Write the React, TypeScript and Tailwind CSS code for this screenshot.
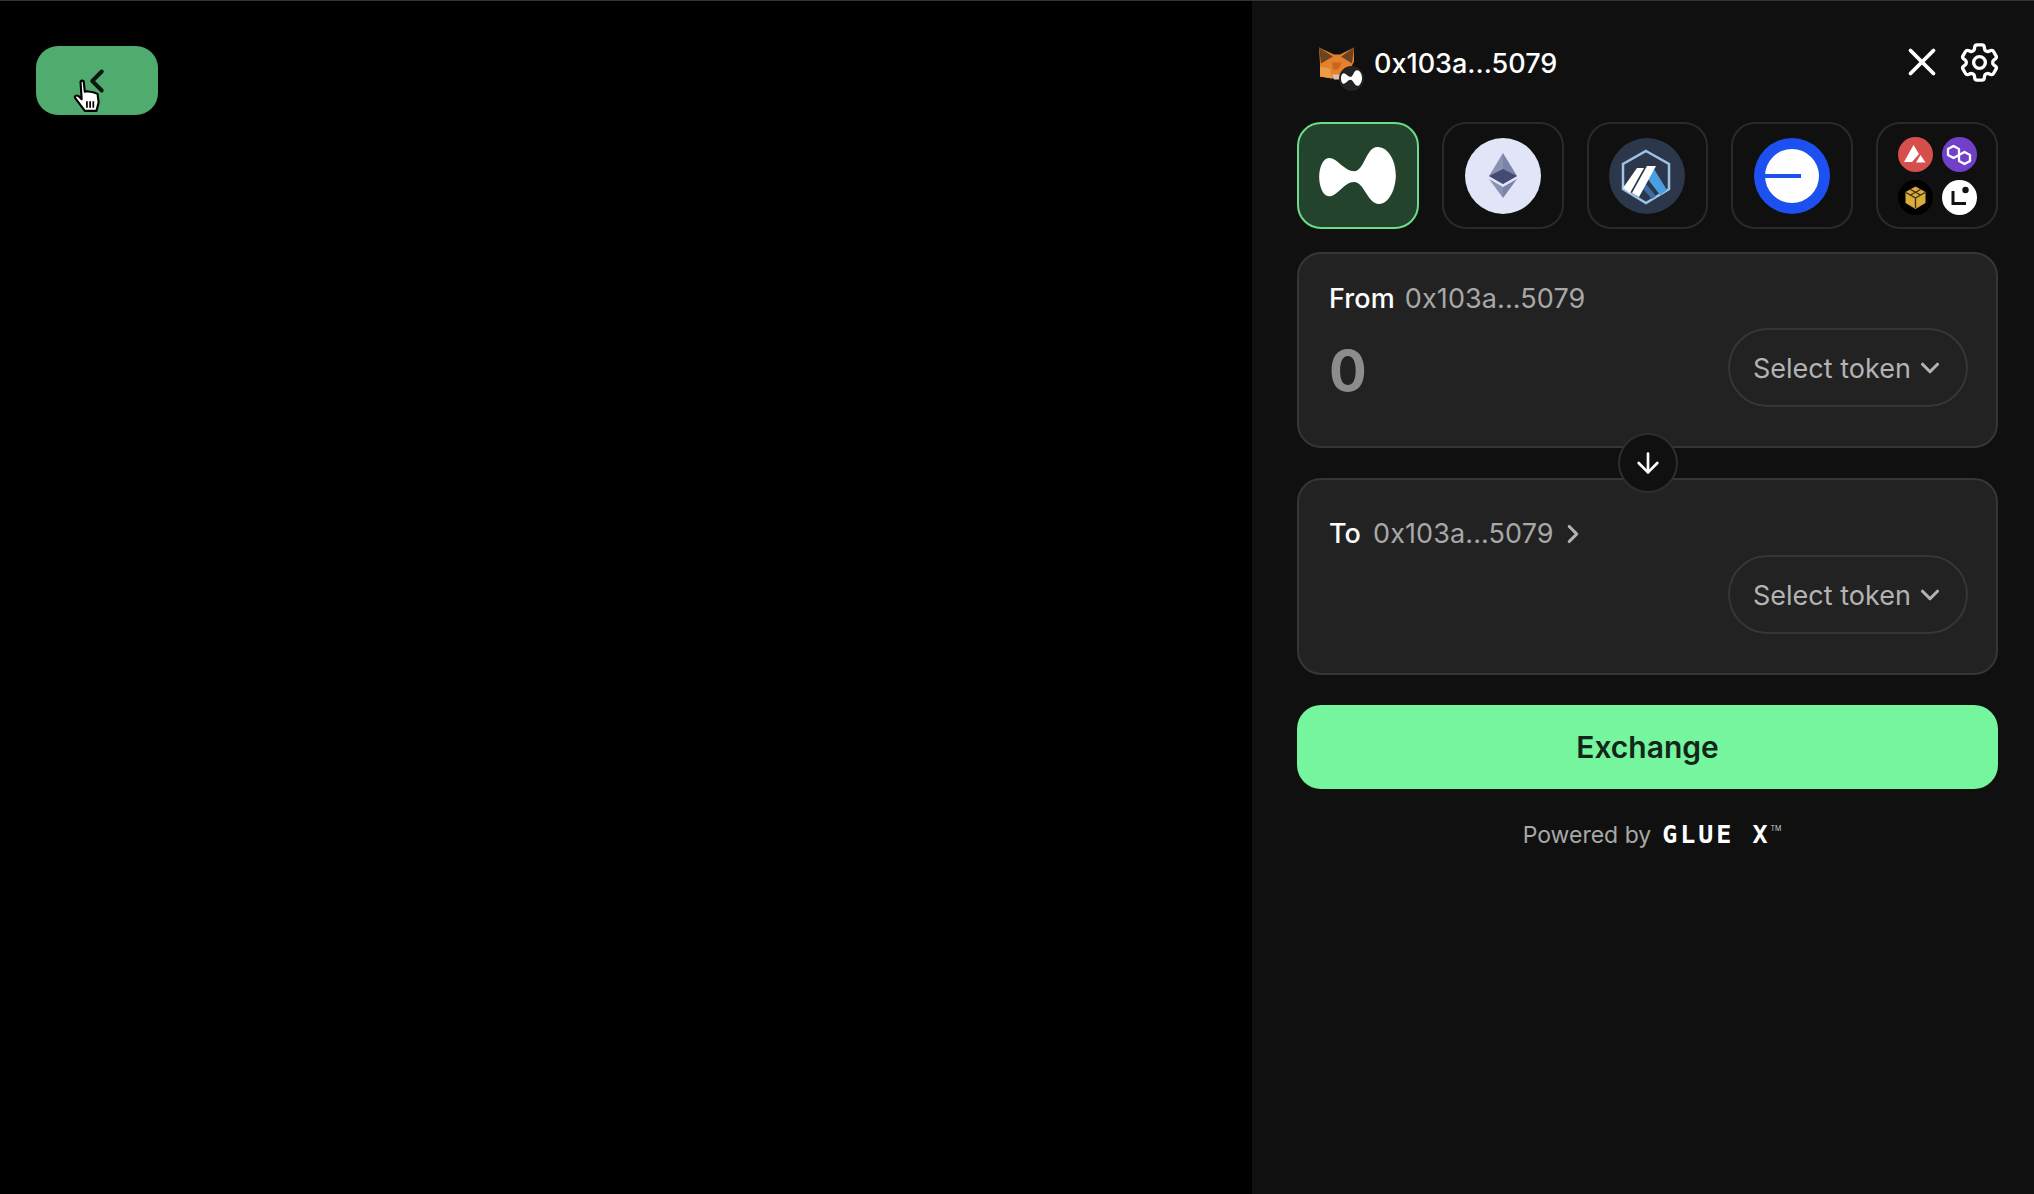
import React from 'react';
import { ArrowDown, ChevronDown, ChevronLeft, ChevronRight, X } from 'lucide-react';
import { HiOutlineCog6Tooth } from 'react-icons/hi2';

const GlueMark = ({ className }: { className: string }) => (
  <svg viewBox="0 0 230 171" className={className} fill="white">
    <path d="M30 33C55 33 75 73 105 73C135 73 140 0 175 0C210 0 230 45 230 85C230 125 210 171 180 171C145 171 135 105 105 105C75 105 55 148 30 148C10 148 0 115 0 90C0 65 10 33 30 33Z" />
  </svg>
);

const Fox = () => (
  <svg viewBox="0 0 36 32" className="w-[36px] h-[33px]">
    <polygon points="1,0 16,7 22,7 36,0 36,14 31,24 24,30 14,31 2,29 2,16" fill="#e5802c" />
    <polygon points="1,0 15,9 3,16" fill="#6b4320" />
    <polygon points="36,0 23,9 34,16" fill="#6b4320" />
    <polygon points="2,19 12,21 14,31 2,29" fill="#ec9a45" />
    <polygon points="14,15 24,15 20,22 15,22" fill="#c9661c" />
    <polygon points="14,27 22,27 22,32 16,32" fill="#d7c1b3" />
  </svg>
);

const EthIcon = () => (
  <svg viewBox="0 0 76 76" className="w-[76px] h-[76px]">
    <circle cx="38" cy="38" r="38" fill="#e2e5f8" />
    <polygon points="38,15 24,38 38,46" fill="#8a92b2" />
    <polygon points="38,15 52,38 38,46" fill="#7c83a8" />
    <polygon points="24,38 38,31 52,38 38,46" fill="#454a75" />
    <polygon points="24,41 38,60 38,49" fill="#8a92b2" />
    <polygon points="52,41 38,60 38,49" fill="#7c83a8" />
  </svg>
);

const ArbIcon = () => (
  <svg viewBox="0 0 76 76" className="w-[76px] h-[76px]">
    <circle cx="38" cy="38" r="38" fill="#2d374b" />
    <polygon points="37,13 60,26 60,51 37,65 14,51 14,26" fill="#2d374b" stroke="#9dc3e6" strokeWidth="2.5" />
    <polygon points="45,31 58,52 51,57 38,40" fill="#4a9fe3" />
    <polygon points="37,46 47,58 43,61 34,51" fill="#3b6ea5" />
    <polygon points="28,30 35,30 21,55 14,50" fill="white" />
    <polygon points="38,28 47,28 30,59 23,55" fill="white" />
  </svg>
);

const BaseIcon = () => (
  <svg viewBox="0 0 76 76" className="w-[76px] h-[76px]">
    <circle cx="38" cy="38" r="38" fill="#1c50f0" />
    <circle cx="38" cy="38" r="27" fill="white" />
    <rect x="10" y="36" width="37" height="4" fill="#1c50f0" />
  </svg>
);

const MiniIcons = () => (
  <div className="grid grid-cols-2 gap-x-[9px] gap-y-[8px]">
    <svg viewBox="0 0 35 35" className="w-[35px] h-[35px]">
      <circle cx="17.5" cy="17.5" r="17.5" fill="#d64f4c" />
      <polygon points="15.5,8 21,17 14,25 6,25" fill="white" />
      <polygon points="22.5,18 27.5,25.5 18,25.5" fill="white" />
    </svg>
    <svg viewBox="0 0 35 35" className="w-[35px] h-[35px]">
      <circle cx="17.5" cy="17.5" r="17.5" fill="#7040c8" />
      <path d="M17 18V12L11.5 9L6 12V18L11.5 21L17 18L22.5 15L28 18V24L22.5 27L17 24V18" fill="none" stroke="white" strokeWidth="2.3" strokeLinejoin="round" />
    </svg>
    <svg viewBox="0 0 35 35" className="w-[35px] h-[35px]">
      <circle cx="17.5" cy="17.5" r="17.5" fill="black" />
      <polygon points="17.5,6.5 27.5,12 27.5,23 17.5,29 7.5,23 7.5,12" fill="#d8ab3c" />
      <path d="M17.5 18V28M17.5 18L8 12.5M17.5 18L27 12.5M12.5 9.5L22.5 15M22.5 9.5L12.5 15" stroke="#3a2c08" strokeWidth="1.3" />
    </svg>
    <svg viewBox="0 0 35 35" className="w-[35px] h-[35px]">
      <circle cx="17.5" cy="17.5" r="17.5" fill="white" />
      <path d="M11 11V23.5H24" fill="none" stroke="#111111" strokeWidth="3" />
      <circle cx="23.5" cy="10" r="3.2" fill="#111111" />
    </svg>
  </div>
);

const HandCursor = () => (
  <svg viewBox="0 0 28 32" className="absolute left-[73px] top-[78px] w-[30px] h-[34px]">
    <path d="M7 3C7 1 10 1 10 3L11 12L13 11.5L16 12L19 12.5L23 14L24 22L22 30L11 30L8 26L2 18C1 16 3 15 5 16L8 19Z" fill="white" stroke="black" strokeWidth="2" strokeLinejoin="round" />
    <path d="M13 21V27M16 21V27M19 21V27" stroke="black" strokeWidth="1.6" />
  </svg>
);

const SelectToken = () => (
  <button className="w-[240px] h-[79px] rounded-full border-2 border-[#363636] flex items-center pl-[23px] text-[#b3b3b3] text-[27px]">
    <span className="pt-[3px]">Select token</span>
    <ChevronDown className="w-[30px] h-[30px] ml-[4px]" strokeWidth={2.5} />
  </button>
);

const chainClass = 'flex-1 h-[107px] rounded-[24px] border-2 flex items-center justify-center';

const App = () => {
  return (
    <div className="flex h-screen bg-black border-t border-[#333333] text-white overflow-hidden font-['Inter',sans-serif]">
      <div className="relative flex-1 pl-[36px] pt-[45px]">
        <button className="w-[122px] h-[69px] rounded-[22px] bg-[#4fab6e] flex items-center justify-center">
          <ChevronLeft className="w-[38px] h-[38px] text-[#08170d]" strokeWidth={2.5} />
        </button>
        <HandCursor />
      </div>

      <div className="w-[782px] bg-[#101010] pl-[45px] pr-[36px] pt-[41px]">
        <div className="flex items-center h-[40px]">
          <div className="relative w-[56px] ml-[21px] mt-[2px]">
            <Fox />
            <div className="absolute left-[21px] top-[19px] w-[25px] h-[25px] rounded-full bg-[#232323] flex items-center justify-center">
              <GlueMark className="w-[21px] h-[16px]" />
            </div>
          </div>
          <span className="text-[27px] font-medium mt-[5px]">0x103a...5079</span>
          <X className="w-[46px] h-[46px] ml-auto mr-[11px]" strokeWidth={2} />
          <HiOutlineCog6Tooth className="w-[47px] h-[47px] -mr-[5px]" strokeWidth={1.7} />
        </div>

        <div className="flex gap-[23px] mt-[40px]">
          <div className={`${chainClass} bg-[#24432c] border-[#6bdc8c]`}>
            <GlueMark className="w-[77px] h-[57px]" />
          </div>
          <div className={`${chainClass} border-[#2a2a2a]`}><EthIcon /></div>
          <div className={`${chainClass} border-[#2a2a2a]`}><ArbIcon /></div>
          <div className={`${chainClass} border-[#2a2a2a]`}><BaseIcon /></div>
          <div className={`${chainClass} border-[#2a2a2a]`}><MiniIcons /></div>
        </div>

        <div className="relative mt-[23px]">
          <div className="h-[196px] rounded-[24px] bg-[#222222] border-2 border-[#363636] pl-[30px] pr-[28px] pt-[29px]">
            <div className="flex items-center h-[32px] text-[27px] tracking-[0.1px]">
              <span className="font-medium">From</span>
              <span className="ml-[10px] text-[#a8a8a8]">0x103a...5079</span>
            </div>
            <div className="flex items-center justify-between mt-[13px]">
              <span className="text-[56px] font-bold text-[#8c8c8c] leading-none pt-[6px]">0</span>
              <SelectToken />
            </div>
          </div>

          <div className="absolute left-1/2 top-[181px] -translate-x-1/2 w-[60px] h-[60px] rounded-full bg-[#101010] border-2 border-[#2e2e2e] flex items-center justify-center z-10">
            <ArrowDown className="w-[32px] h-[32px]" strokeWidth={2} />
          </div>

          <div className="h-[197px] mt-[30px] rounded-[24px] bg-[#222222] border-2 border-[#363636] pl-[30px] pr-[28px] pt-[38px]">
            <div className="flex items-center h-[32px] text-[27px] tracking-[0.1px]">
              <span className="font-medium">To</span>
              <span className="ml-[12px] text-[#a8a8a8]">0x103a...5079</span>
              <ChevronRight className="w-[30px] h-[30px] ml-[4px] text-[#b3b3b3]" strokeWidth={2.5} />
            </div>
            <div className="flex justify-end mt-[5px]">
              <SelectToken />
            </div>
          </div>
        </div>

        <button className="w-full h-[84px] mt-[30px] rounded-[24px] bg-[#74f59e] text-[#12261a] text-[30px] font-semibold">
          Exchange
        </button>

        <div className="flex items-center justify-center mt-[32px] h-[28px] pl-[9px]">
          <span className="text-[23px] text-[#a8a8a8]">Powered by</span>
          <span className="ml-[11px] text-[25px] font-bold tracking-[3px] font-['DejaVu_Sans_Mono',monospace] whitespace-nowrap">GLUE X</span>
          <span className="text-[7px] self-start mt-[3px] text-[#cccccc]">TM</span>
        </div>
      </div>
    </div>
  );
};

export default App;
